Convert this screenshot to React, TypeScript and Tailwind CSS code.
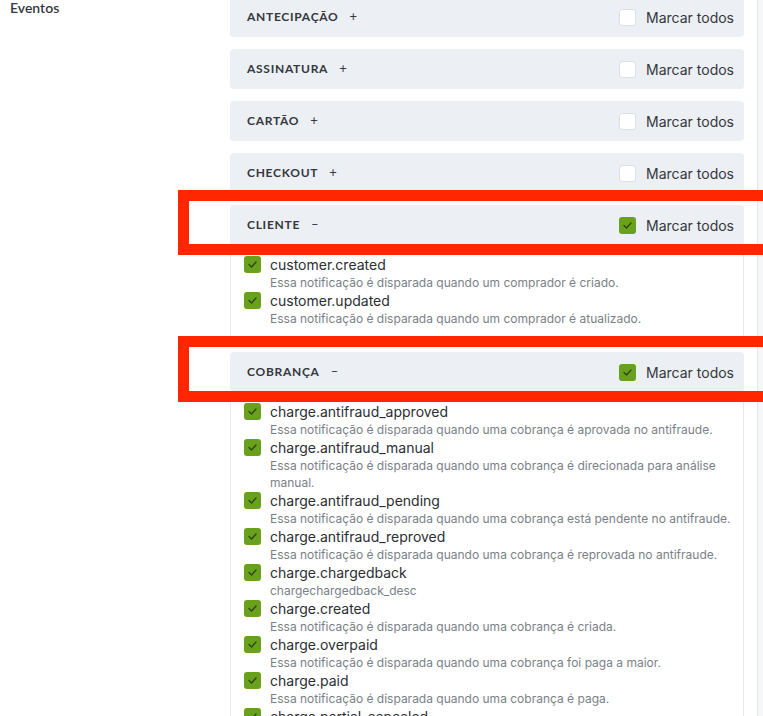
import React from "react";

type Item = { name: string; desc: string };

const clienteItems: Item[] = [
  { name: "customer.created", desc: "Essa notificação é disparada quando um comprador é criado." },
  { name: "customer.updated", desc: "Essa notificação é disparada quando um comprador é atualizado." },
];

const cobrancaItems: Item[] = [
  { name: "charge.antifraud_approved", desc: "Essa notificação é disparada quando uma cobrança é aprovada no antifraude." },
  { name: "charge.antifraud_manual", desc: "Essa notificação é disparada quando uma cobrança é direcionada para análise manual." },
  { name: "charge.antifraud_pending", desc: "Essa notificação é disparada quando uma cobrança está pendente no antifraude." },
  { name: "charge.antifraud_reproved", desc: "Essa notificação é disparada quando uma cobrança é reprovada no antifraude." },
  { name: "charge.chargedback", desc: "chargechargedback_desc" },
  { name: "charge.created", desc: "Essa notificação é disparada quando uma cobrança é criada." },
  { name: "charge.overpaid", desc: "Essa notificação é disparada quando uma cobrança foi paga a maior." },
  { name: "charge.paid", desc: "Essa notificação é disparada quando uma cobrança é paga." },
  { name: "charge.partial_canceled", desc: "Essa notificação é disparada quando uma cobrança é parcialmente cancelada." },
];

const Check = ({ checked }: { checked: boolean }) =>
  checked ? (
    <span className="flex h-[17px] w-[17px] shrink-0 items-center justify-center rounded-[3px] bg-[#6aa11c]">
      <svg width="9" height="7" viewBox="0 0 9 7" fill="none">
        <polyline points="1,3.5 3.5,6 8,1" stroke="#2c4410" strokeWidth="1.3" strokeLinecap="round" strokeLinejoin="round" />
      </svg>
    </span>
  ) : (
    <span className="h-[17px] w-[17px] shrink-0 rounded-[3px] border border-[#dcdfe4] bg-white" />
  );

const Header = ({ label, open, checked }: { label: string; open: boolean; checked: boolean }) => (
  <div className="flex h-10 shrink-0 items-center justify-between rounded-[4px] bg-[#eceff4] pl-[17px] pr-[10px]">
    <div className="flex items-center gap-[11px] font-['Lato',sans-serif] text-[12px] font-bold tracking-[0.06em] text-[#34383e]">
      <span>{label}</span>
      <span className="text-[13px] font-normal">{open ? "–" : "+"}</span>
    </div>
    <div className="flex items-center gap-[10px]">
      <Check checked={checked} />
      <span className="text-[14px] text-[#34373c]">Marcar todos</span>
    </div>
  </div>
);

const EventList = ({ items }: { items: Item[] }) => (
  <div className="flex flex-col gap-px border-x border-b border-[#e6e8ec] pb-[12px] pl-[13px] pr-[6px] pt-[11px]">
    {items.map((it) => (
      <div key={it.name} className="flex items-start gap-[9px]">
        <Check checked />
        <div className="flex flex-col">
          <span className="text-[14px] leading-[18px] text-[#2b2e33]">{it.name}</span>
          <span className="text-[12px] leading-[17px] text-[#7a7f87]">{it.desc}</span>
        </div>
      </div>
    ))}
  </div>
);

export default function App() {
  return (
    <div className="relative flex h-[716px] w-[763px] items-start overflow-hidden bg-white font-['Inter',sans-serif]">
      <div className="w-[230px] shrink-0 pl-[10px] font-['Lato',sans-serif] text-[14px] font-semibold leading-[16px] text-[#34383e]">
        Eventos
      </div>
      <div className="mt-[-3px] flex w-[514px] shrink-0 flex-col gap-3">
        <Header label="ANTECIPAÇÃO" open={false} checked={false} />
        <Header label="ASSINATURA" open={false} checked={false} />
        <Header label="CARTÃO" open={false} checked={false} />
        <Header label="CHECKOUT" open={false} checked={false} />
        <div className="shrink-0">
          <Header label="CLIENTE" open checked />
          <EventList items={clienteItems} />
        </div>
        <div className="shrink-0">
          <Header label="COBRANÇA" open checked />
          <EventList items={cobrancaItems} />
        </div>
      </div>
      <div className="ml-[13px] h-full flex-1 border-l border-[#e3e6ea] bg-[#f5f7f9]" />

      {/* annotation boxes */}
      <div className="absolute left-[178px] top-[190px] h-[65px] w-[600px] border-[11px] border-[#ff2600]" />
      <div className="absolute left-[178px] top-[336px] h-[66px] w-[600px] border-[11px] border-[#ff2600]" />
    </div>
  );
}
